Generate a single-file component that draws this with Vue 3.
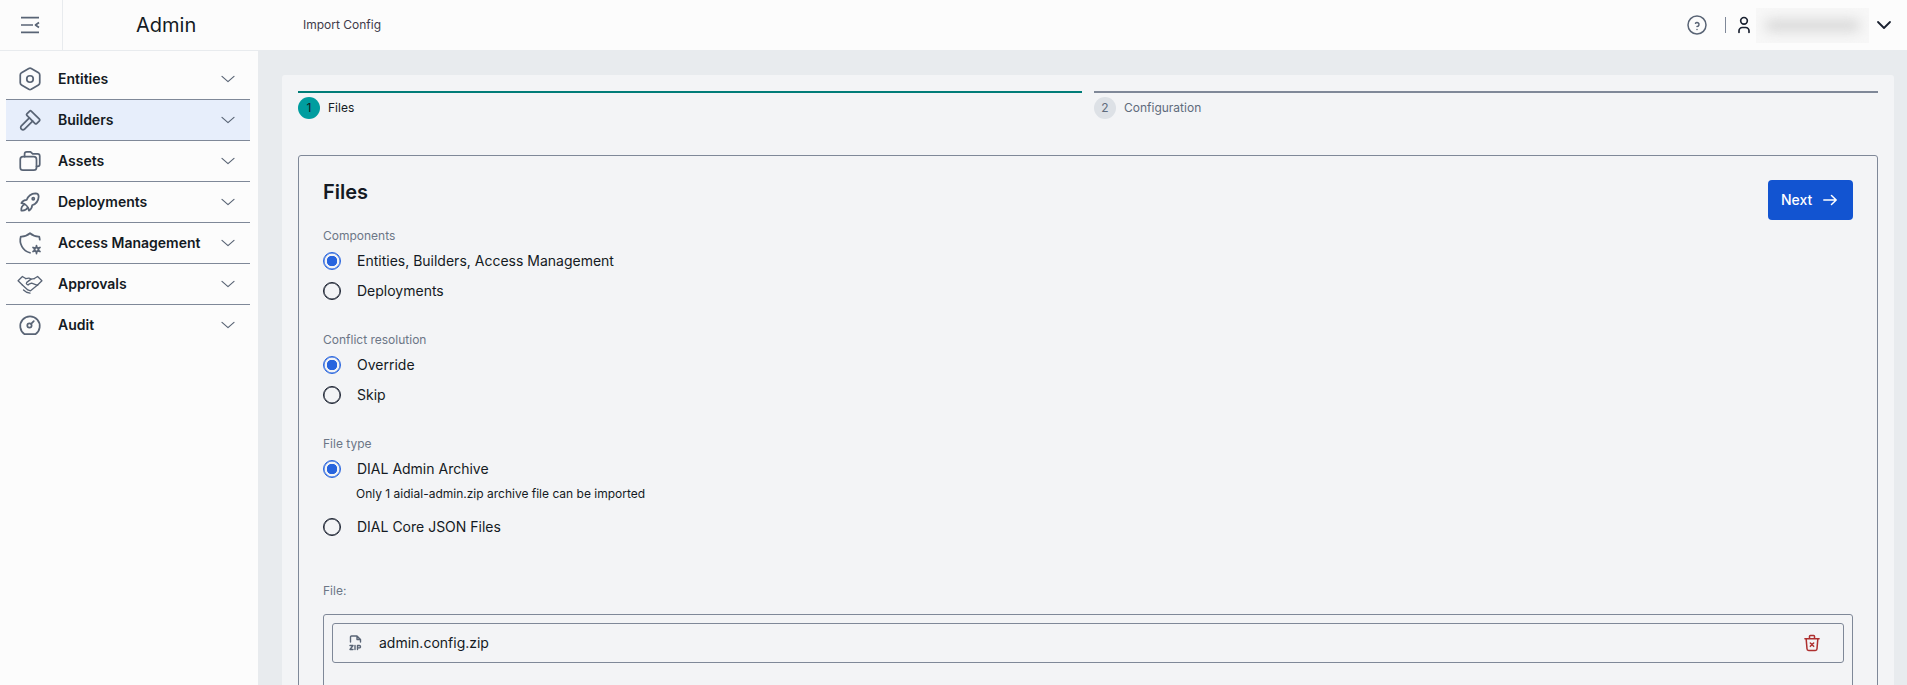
<script setup>
const nav = [
  { label: 'Entities', icon: 'hex' },
  { label: 'Builders', icon: 'hammer', active: true },
  { label: 'Assets', icon: 'folders' },
  { label: 'Deployments', icon: 'rocket' },
  { label: 'Access Management', icon: 'shield' },
  { label: 'Approvals', icon: 'shake' },
  { label: 'Audit', icon: 'gauge' },
]
const groups = [
  { title: 'Components', options: [{ label: 'Entities, Builders, Access Management', on: true }, { label: 'Deployments' }] },
  { title: 'Conflict resolution', options: [{ label: 'Override', on: true }, { label: 'Skip' }] },
  { title: 'File type', options: [{ label: 'DIAL Admin Archive', on: true, hint: 'Only 1 aidial-admin.zip archive file can be imported' }, { label: 'DIAL Core JSON Files' }] },
]
</script>

<template>
  <div class="app">
    <header class="topbar">
      <div class="burger">
        <svg width="24" height="24" viewBox="0 0 24 24" fill="none" stroke="#596475" stroke-width="1.7" stroke-linejoin="round">
          <path d="M2 4.700h18M2 12h12M2 19.300h18M20 9.500l-3.500 2.500l3.500 2.500" />
        </svg>
      </div>
      <div class="brand">Admin</div>
      <div class="crumb">Import Config</div>
      <div class="top-right">
        <svg class="help" width="24" height="24" viewBox="0 0 24 24" fill="none" stroke="#596475" stroke-width="1.5" stroke-linecap="round" stroke-linejoin="round">
          <circle cx="12" cy="12" r="9" />
          <path d="M12 16.500v.01M12 13.500a2 2 0 0 0 .914 -3.782a1.980 1.980 0 0 0 -2.414 .483" />
        </svg>
        <span class="sep"></span>
        <svg class="user" width="20" height="20" viewBox="0 0 24 24" fill="none" stroke="#1a2130" stroke-width="2" stroke-linecap="round" stroke-linejoin="round">
          <circle cx="12" cy="7" r="4" />
          <path d="M6 21v-2a4 4 0 0 1 4 -4h4a4 4 0 0 1 4 4v2" />
        </svg>
        <div class="blur-box"><span class="blur-bar"></span></div>
        <svg class="user-chev" width="24" height="24" viewBox="0 0 24 24" fill="none" stroke="#1a2130" stroke-width="1.8" stroke-linecap="round" stroke-linejoin="round">
          <path d="M6 9l6 6l6 -6" />
        </svg>
      </div>
    </header>

    <div class="body">
      <aside class="sidebar">
        <div v-for="item in nav" :key="item.label" class="nav-item" :class="{ active: item.active }">
          <svg class="nav-icon" width="26" height="26" viewBox="0 0 24 24" fill="none" stroke="#596475" stroke-width="1.600" stroke-linecap="round" stroke-linejoin="round">
            <template v-if="item.icon === 'hex'">
              <path d="M19.875 6.270a2.225 2.225 0 0 1 1.125 1.948v7.284c0 .809 -.443 1.555 -1.158 1.948l-6.750 3.980a2.269 2.269 0 0 1 -2.184 0l-6.750 -3.980a2.225 2.225 0 0 1 -1.158 -1.948v-7.285c0 -.809 .443 -1.554 1.158 -1.947l6.750 -3.980a2.330 2.330 0 0 1 2.250 0l6.750 3.980z" />
              <circle cx="12" cy="12" r="3" />
            </template>
            <template v-else-if="item.icon === 'hammer'">
              <path d="M11.414 10l-7.383 7.418a2.091 2.091 0 0 0 0 2.967a2.110 2.110 0 0 0 2.976 0l7.407 -7.385" />
              <path d="M18.121 15.293l2.586 -2.586a1 1 0 0 0 0 -1.414l-7.586 -7.586a1 1 0 0 0 -1.414 0l-2.586 2.586a1 1 0 0 0 0 1.414l7.586 7.586a1 1 0 0 0 1.414 0z" />
            </template>
            <template v-else-if="item.icon === 'folders'">
              <rect x="3" y="8" width="15" height="12.500" rx="2.500" />
              <path d="M7 8v-2.500a2 2 0 0 1 2 -2h3.500l2 2h4.500a2 2 0 0 1 2 2v7.500a2 2 0 0 1 -2 2h-1" />
            </template>
            <template v-else-if="item.icon === 'rocket'">
              <path d="M4 13a8 8 0 0 1 7 7a6 6 0 0 0 3 -5a9 9 0 0 0 6 -8a3 3 0 0 0 -3 -3a9 9 0 0 0 -8 6a6 6 0 0 0 -5 3" />
              <path d="M7 14a6 6 0 0 0 -3 6a6 6 0 0 0 6 -3" />
              <circle cx="15" cy="9" r="1" />
            </template>
            <template v-else-if="item.icon === 'shield'">
              <path d="M12 21a12 12 0 0 1 -8.500 -15a12 12 0 0 0 8.500 -3a12 12 0 0 0 8.500 3c.300 1 .450 2 .500 3" />
              <circle cx="18" cy="18" r="1.800" stroke-width="1.800" />
              <path d="M18 14.300v1.400M18 20.300v1.400M14.800 16.100l1.200 .700M20 19.200l1.200 .700M14.800 19.900l1.200 -.700M20 16.800l1.200 -.700" stroke-width="1.600" />
            </template>
            <template v-else-if="item.icon === 'shake'">
              <g stroke-width="1.200">
                <path d="M1 9l4 -4l3 2M1 9l4 4M23 9l-4 -4l-3 2M23 9l-4 4" />
                <path d="M8 7l3 -.500l2 1l3 -.500" />
                <path d="M13 7.500l-4 3a1.300 1.300 0 0 0 2 1.700l2.500 -1l5.500 2" />
                <path d="M5 13l5 4.500l2.500 .800l6.500 -5.300" />
                <path d="M6 17.500c1.500 1.500 3.500 2.500 6 3" />
              </g>
            </template>
            <template v-else>
              <path d="M7 20.500a9 9 0 1 1 10 0z" />
              <circle cx="11.500" cy="12.500" r="2" />
              <path d="M13 11l2.500 -2.500" />
            </template>
          </svg>
          <span class="nav-label">{{ item.label }}</span>
          <svg class="nav-chev" width="18" height="18" viewBox="0 0 24 24" fill="none" stroke="#596475" stroke-width="1.600" stroke-linecap="round" stroke-linejoin="round">
            <path d="M4 8.500l8 7l8 -7" />
          </svg>
        </div>
      </aside>

      <main class="main">
        <section class="panel">
          <div class="steps">
            <div class="step done">
              <div class="step-line"></div>
              <div class="step-head"><span class="step-num">1</span><span class="step-text">Files</span></div>
            </div>
            <div class="step todo">
              <div class="step-line"></div>
              <div class="step-head"><span class="step-num">2</span><span class="step-text">Configuration</span></div>
            </div>
          </div>

          <div class="card">
            <div class="card-head">
              <h2 class="card-title">Files</h2>
              <button class="next" type="button">
                <span>Next</span>
                <svg width="14" height="14" viewBox="0 0 14 14" fill="none" stroke="#fff" stroke-width="1.500" stroke-linecap="round" stroke-linejoin="round">
                  <path d="M.800 7h12.400M8.500 2.500l4.700 4.500l-4.700 4.500" />
                </svg>
              </button>
            </div>

            <div v-for="g in groups" :key="g.title" class="group">
              <div class="group-title">{{ g.title }}</div>
              <template v-for="o in g.options" :key="o.label">
                <div class="radio-row">
                  <span class="radio" :class="{ on: o.on }"></span>
                  <span class="radio-label">{{ o.label }}</span>
                </div>
                <div v-if="o.hint" class="hint">{{ o.hint }}</div>
              </template>
            </div>

            <div class="file-title">File:</div>
            <div class="dropzone">
              <div class="file-row">
                <svg class="zip" width="18" height="18" viewBox="0 0 18 18" fill="none" stroke="#596475" stroke-width="1.400" stroke-linecap="round" stroke-linejoin="round">
                  <path d="M3.500 8v-5a1 1 0 0 1 1 -1h5.500l3.500 3.500v2.500M10 2v3.500h3.500" />
                  <path d="M3 11.500h3l-3 4h3M8 11.500v4M10.500 15.500v-4h1.800a1.200 1.200 0 0 1 0 2.400h-1.800" />
                </svg>
                <span class="file-name">admin.config.zip</span>
                <svg class="trash" width="20" height="20" viewBox="0 0 24 24" fill="none" stroke="#ae2f2f" stroke-width="1.800" stroke-linecap="round" stroke-linejoin="round">
                  <path d="M3.500 7h17M5 7l1 12a2 2 0 0 0 2 2h8a2 2 0 0 0 2 -2l1 -12M9 7v-3a1 1 0 0 1 1 -1h4a1 1 0 0 1 1 1v3M10 12l4 4m0 -4l-4 4" />
                </svg>
              </div>
            </div>
          </div>
        </section>
      </main>
    </div>
  </div>
</template>

<style>
html, body { margin: 0; height: 100%; overflow: hidden; }
</style>

<style scoped>
.app {
  height: 685px;
  display: flex;
  flex-direction: column;
  overflow: hidden;
  font-family: Inter, "Liberation Sans", sans-serif;
  color: #141a23;
  background: #e8ebee;
}
.topbar {
  height: 50px;
  flex: none;
  display: flex;
  align-items: center;
  background: #fcfcfc;
  border-bottom: 1px solid #e8ebee;
}
.burger {
  width: 62px;
  height: 50px;
  flex: none;
  display: flex;
  align-items: center;
  justify-content: center;
  border-right: 1px solid #e8ebee;
}
.brand {
  width: 166px;
  padding-left: 73px;
  box-sizing: border-box;
  font-size: 20px;
  line-height: 28px;
}
.crumb { margin-left: 74px; font-size: 12px; line-height: 16px; color: #3f3a4a; }
.top-right { margin-left: auto; display: flex; align-items: center; padding-right: 11px; }
.help { display: block; }
.sep { width: 1px; height: 16px; background: #7f8898; margin-left: 16px; margin-right: 8px; }
.user { display: block; }
.blur-box {
  width: 113px;
  height: 35px;
  margin-left: 2px;
  background: #f7f7f7;
  display: flex;
  align-items: center;
  justify-content: center;
  overflow: hidden;
}
.blur-bar {
  width: 95px;
  height: 13px;
  background: #dadada;
  filter: blur(6px);
  border-radius: 6px;
}
.user-chev { margin-left: 3px; display: block; }
.body { flex: 1; display: flex; min-height: 0; }
.sidebar {
  width: 258px;
  flex: none;
  box-sizing: border-box;
  padding: 8px 8px 0 6px;
  background: #fcfcfc;
}
.nav-item {
  height: 41px;
  box-sizing: border-box;
  display: flex;
  align-items: center;
  padding-left: 11px;
  padding-right: 13px;
  border-bottom: 1px solid #7f8898;
}
.nav-item:last-child { border-bottom-color: transparent; }
.nav-item.active { background: #e7eefb; }
.nav-icon { flex: none; display: block; }
.nav-label { margin-left: 15px; font-size: 14px; font-weight: 600; line-height: 20px; }
.nav-chev { margin-left: auto; display: block; }
.main {
  flex: 1;
  min-width: 0;
  padding: 24px 13px 0 24px;
}
.panel {
  height: 700px;
  box-sizing: border-box;
  padding: 16px 16px 0;
  background: #f3f4f6;
  border-radius: 3px;
}
.steps { display: flex; gap: 12px; }
.step { flex: 1; }
.step-line { height: 2px; }
.done .step-line { background: #007c78; }
.todo .step-line { background: #7f8898; }
.step-head { display: flex; align-items: center; margin-top: 4px; }
.step-num {
  width: 22px;
  height: 22px;
  border-radius: 50%;
  display: flex;
  align-items: center;
  justify-content: center;
  font-size: 12px;
  line-height: 16px;
}
.done .step-num { background: #009d9f; color: #141a23; }
.todo .step-num { background: #dde1e6; color: #5f6b7c; }
.step-text { margin-left: 8px; font-size: 12px; line-height: 16px; }
.todo .step-text { color: #5f6b7c; }
.card {
  margin-top: 36px;
  height: 600px;
  box-sizing: border-box;
  padding: 24px 24px 0;
  border: 1px solid #7f8898;
  border-radius: 3px;
}
.card-head { display: flex; justify-content: space-between; align-items: flex-start; height: 40px; margin-bottom: 8px; }
.card-title { margin: 0; font-size: 20px; font-weight: 600; line-height: 24px; }
.next {
  width: 85px;
  height: 40px;
  box-sizing: border-box;
  padding: 0 0 0 13px;
  display: flex;
  align-items: center;
  gap: 11px;
  border: none;
  border-radius: 4px;
  background: #1254d1;
  color: #fff;
  font: 500 14px/20px Inter, "Liberation Sans", sans-serif;
}
.group { margin-bottom: 26px; }
.group-title { font-size: 12px; line-height: 16px; color: #6c7686; margin-bottom: 2px; }
.radio-row { display: flex; align-items: center; height: 30px; }
.radio {
  width: 18px;
  height: 18px;
  flex: none;
  box-sizing: border-box;
  border: 1px solid #1a2130;
  box-shadow: inset 0 0 0 .5px #1a2130;
  border-radius: 50%;
}
.radio.on {
  border-color: #2764de;
  box-shadow: inset 0 0 0 .5px #2764de;
  background: radial-gradient(circle, #2764de 0 5px, transparent 5.500px);
}
.radio-label { margin-left: 16px; font-size: 14px; line-height: 20px; }
.hint { margin-left: 33px; font-size: 12px; line-height: 16px; margin-top: 2px; margin-bottom: 10px; }
.file-title { margin-top: 41px; font-size: 12px; line-height: 16px; color: #6c7686; }
.dropzone {
  margin-top: 15px;
  height: 200px;
  box-sizing: border-box;
  padding: 8px;
  border: 1px solid #7f8898;
  border-radius: 3px;
}
.file-row {
  height: 40px;
  box-sizing: border-box;
  display: flex;
  align-items: center;
  padding: 0 21px 0 14px;
  border: 1px solid #7f8898;
  border-radius: 3px;
}
.zip { display: block; flex: none; }
.file-name { margin-left: 14px; font-size: 14px; line-height: 20px; }
.trash { margin-left: auto; display: block; }
</style>
